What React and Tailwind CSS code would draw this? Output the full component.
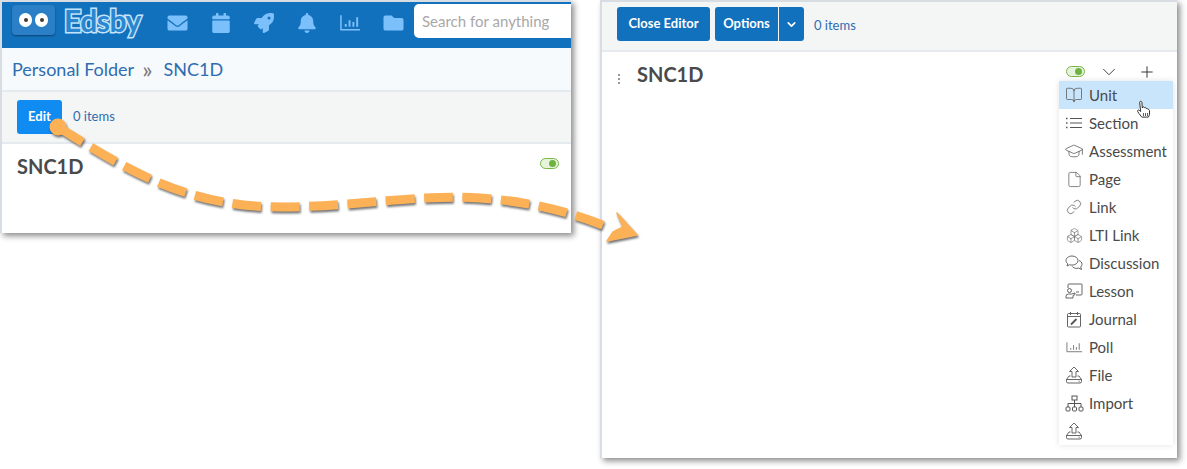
import { FaEnvelope, FaCalendar, FaRocket, FaBell, FaFolder } from 'react-icons/fa'
import { BookOpen, GraduationCap, File, Link, Boxes, ChevronDown, Plus } from 'lucide-react'

function ChartIcon({ className }) {
  return (
    <svg viewBox="0 0 22 18" className={className} fill="none" stroke="currentColor">
      <path d="M1 1v15h20" strokeWidth="1.6" />
      <path d="M6 13v-3M10 13V6M14 13V8M18 13V3" strokeWidth="2" />
    </svg>
  )
}

function ThinChart({ className }) {
  return (
    <svg viewBox="0 0 18 12" className={className} fill="none" stroke="currentColor" strokeWidth="0.8">
      <path d="M1 1v10h16" />
      <path d="M5 9V7M8 9V4M11 9V6M14 9V2" />
    </svg>
  )
}

function UploadTray({ className }) {
  return (
    <svg viewBox="0 0 18 18" className={className} fill="none" stroke="currentColor" strokeWidth="0.9">
      <path d="M9 1 4.500 5.500h2.500v5.500h4V5.500h2.500z" strokeLinejoin="round" />
      <path d="M5.500 10H4l-2.500 3.500v2A1.500 1.500 0 0 0 3 17h12a1.500 1.500 0 0 0 1.500-1.500v-2L14 10h-1.500M1.500 13.500h15" strokeLinejoin="round" />
      <path d="M13.500 15.200h1.200" />
    </svg>
  )
}

function Lesson({ className }) {
  return (
    <svg viewBox="0 0 18 16" className={className} fill="none" stroke="currentColor" strokeWidth="0.9">
      <path d="M3 5V2a1 1 0 0 1 1-1h12.500a.5.5 0 0 1 .5.5V11a1 1 0 0 1-1 1h-5" />
      <circle cx="4.500" cy="7.500" r="2" />
      <path d="M1 15v-1.500A2.500 2.500 0 0 1 3.500 11h3L10 10v1.500l-2 1V15z" strokeLinejoin="round" />
      <path d="M11 9h3" />
    </svg>
  )
}

function Journal({ className }) {
  return (
    <svg viewBox="0 0 16 17" className={className} fill="none" stroke="currentColor" strokeWidth="0.9">
      <rect x="1.500" y="2.500" width="13" height="13.500" rx="1" />
      <path d="M1.500 5.500h13M4.500 1v3M11.500 1v3" />
      <path d="M5 13.500 10.500 8" strokeWidth="1.800" />
    </svg>
  )
}

function Discussion({ className }) {
  return (
    <svg viewBox="0 0 18 16" className={className} fill="none" stroke="currentColor" strokeWidth="0.9">
      <path d="M7 1C3.700 1 1 3 1 5.500c0 1.300.8 2.500 1.800 3.300L2 11l2.500-1.200c.8.200 1.600.3 2.500.3 3.300 0 6-2 6-4.600S10.300 1 7 1z" strokeLinejoin="round" />
      <path d="M14 5.500c1.800.7 3 2 3 3.700 0 1.100-.5 2-1.300 2.800l.8 2.500-2.700-1.400c-.6.200-1.300.3-1.900.3-2 0-3.800-.8-4.700-2.100" strokeLinejoin="round" />
    </svg>
  )
}

function SectionList({ className }) {
  return (
    <svg viewBox="0 0 16 12" className={className} fill="none" stroke="currentColor" strokeWidth="1">
      <path d="M4 1.500h12M4 6h12M4 10.500h12" />
      <path d="M0 1.500h1.500M0 6h1.500M0 10.500h1.500" strokeWidth="1.300" />
    </svg>
  )
}

function Hierarchy({ className }) {
  return (
    <svg viewBox="0 0 19 17" className={className} fill="none" stroke="currentColor" strokeWidth="1">
      <rect x="7" y="1" width="5" height="4" />
      <rect x="1" y="12" width="4" height="4" rx="1" />
      <rect x="7.500" y="12" width="4" height="4" rx="1" />
      <rect x="14" y="12" width="4" height="4" rx="1" />
      <path d="M9.500 5v7M3 12V8.500h13V12" />
    </svg>
  )
}

function Toggle() {
  return (
    <span className="flex h-[11px] w-[19px] items-center justify-end rounded-full border border-[#7ab648] bg-[#e8f3dd] pr-[2px]">
      <span className="h-[7px] w-[7px] rounded-full bg-[#6db33f]" />
    </span>
  )
}

function Eye() {
  return (
    <span className="flex h-[14px] w-[13px] items-center justify-center rounded-full bg-white">
      <span className="h-[4px] w-[4px] rounded-full bg-[#4a3a2a]" />
    </span>
  )
}

const menuItems = [
  { label: 'Unit', icon: <BookOpen size={18} strokeWidth={1} />, active: true },
  { label: 'Section', icon: <SectionList className="h-[12px] w-[16px]" /> },
  { label: 'Assessment', icon: <GraduationCap size={20} strokeWidth={0.9} /> },
  { label: 'Page', icon: <File size={17} strokeWidth={1} /> },
  { label: 'Link', icon: <Link size={16} strokeWidth={1.1} /> },
  { label: 'LTI Link', icon: <Boxes size={17} strokeWidth={1} className="text-[#777]" /> },
  { label: 'Discussion', icon: <Discussion className="h-[16px] w-[18px]" /> },
  { label: 'Lesson', icon: <Lesson className="h-[16px] w-[18px]" /> },
  { label: 'Journal', icon: <Journal className="h-[17px] w-[16px]" /> },
  { label: 'Poll', icon: <ThinChart className="h-[12px] w-[17px]" /> },
  { label: 'File', icon: <UploadTray className="h-[18px] w-[18px]" /> },
  { label: 'Import', icon: <Hierarchy className="h-[17px] w-[19px]" /> },
  { label: '', icon: <UploadTray className="h-[18px] w-[18px]" /> },
]

function LeftWindow() {
  return (
    <div className="flex h-[233px] w-[571px] shrink-0 flex-col border-t-2 border-l-2 border-[#d8dde3] shadow-[3px_3px_6px_rgba(0,0,0,0.45)]">
      <div className="flex h-[46px] items-start bg-[#1271bd]">
        <div className="ml-[10px] mt-[3px] flex h-[30px] w-[43px] items-center justify-center gap-[3px] rounded-[4px] bg-[#2a7fc6] shadow-[0_1px_2px_rgba(0,0,0,0.4)]">
          <Eye />
          <Eye />
        </div>
        <span className="ml-[9px] w-[80px] text-[30px] font-bold leading-[36px] tracking-[-0.5px] text-[#2b86d0] [-webkit-text-stroke:3px_#c4e4fb] [paint-order:stroke_fill]">
          Edsby
        </span>
        <div className="ml-[23px] mt-[11px] flex items-center text-[#7cc0fb]">
          <FaEnvelope className="h-[20px] w-[21px]" />
          <FaCalendar className="ml-[24px] h-[20px] w-[18px]" />
          <FaRocket className="ml-[24px] h-[20px] w-[20px]" />
          <FaBell className="ml-[24px] h-[20px] w-[18px]" />
          <ChartIcon className="ml-[24px] h-[18px] w-[21px]" />
          <FaFolder className="ml-[22px] h-[20px] w-[21px]" />
        </div>
        <div className="ml-[10px] mt-[2px] flex h-[34px] flex-1 items-center rounded-l-[5px] bg-white pl-[8px] text-[15px] text-[#a8a8a8]">
          Search for anything
        </div>
      </div>
      <div className="flex h-[44px] items-center border-b-2 border-[#e4eaf0] bg-[#f6fafd] pl-[10px] text-[18px] text-[#2f6cb0]">
        <span>Personal Folder</span>
        <span className="ml-[8px] mr-[11px] text-[24px] leading-none text-[#777]">»</span>
        <span>SNC1D</span>
      </div>
      <div className="flex h-[52px] items-center border-b-2 border-[#e4eaf0] bg-[#f4f6f6] pl-[15px]">
        <div className="flex h-[34px] w-[45px] items-center justify-center rounded-[3px] bg-[#0f8bf2] text-[13px] font-bold text-white">
          Edit
        </div>
        <span className="ml-[11px] text-[13px] text-[#2f6cb0]">0 items</span>
      </div>
      <div className="flex flex-1 items-start justify-between bg-white pl-[15px] pr-[12px]">
        <span className="mt-[9px] text-[20px] font-bold leading-[26px] text-[#4a4a4a]">SNC1D</span>
        <span className="mt-[14px]">
          <Toggle />
        </span>
      </div>
    </div>
  )
}

function RightWindow() {
  return (
    <div className="ml-[29px] flex h-[458px] w-[577px] shrink-0 flex-col border-t-2 border-l-2 border-[#d8dde3] shadow-[3px_3px_6px_rgba(0,0,0,0.45)]">
      <div className="flex h-[50px] shrink-0 items-start gap-[5px] border-b-2 border-[#e4eaf0] bg-[#f4f6f6] pl-[15px] pt-[5px]">
        <div className="flex h-[34px] w-[93px] items-center justify-center rounded-[3px] bg-[#1271bd] text-[13px] font-bold text-white">
          Close Editor
        </div>
        <div className="flex h-[34px] items-stretch text-white">
          <div className="flex w-[63px] items-center justify-center rounded-l-[3px] bg-[#1271bd] text-[13px] font-bold">
            Options
          </div>
          <div className="ml-[1px] flex w-[25px] items-center justify-center rounded-r-[3px] bg-[#1271bd]">
            <ChevronDown size={13} strokeWidth={3} />
          </div>
        </div>
        <span className="ml-[5px] mt-[9px] text-[13px] text-[#2f6cb0]">0 items</span>
      </div>
      <div className="flex flex-1 items-start bg-white">
        <div className="ml-[16px] mt-[22px] flex flex-col gap-[2px]">
          <span className="h-[2px] w-[2px] bg-[#999]" />
          <span className="h-[2px] w-[2px] bg-[#999]" />
          <span className="h-[2px] w-[2px] bg-[#999]" />
        </div>
        <span className="ml-[17px] mt-[9px] text-[20px] font-bold leading-[26px] text-[#4a4a4a]">SNC1D</span>
        <div className="ml-auto mr-[4px] flex w-[114px] flex-col">
          <div className="flex h-[29px] items-center pl-[7px] pt-[10px] text-[#333]">
            <Toggle />
            <ChevronDown size={22} strokeWidth={1} className="ml-[13px]" />
            <Plus size={18} strokeWidth={1.3} className="ml-[18px]" />
          </div>
          <div className="flex flex-col bg-white shadow-[0_0_6px_rgba(0,0,0,0.12)]">
            {menuItems.map((item, i) => (
              <div
                key={i}
                className={
                  item.active
                    ? 'flex h-[28px] items-center bg-[#c9e5fb] text-[15px] text-[#4a4a4a]'
                    : 'flex h-[28px] items-center text-[15px] text-[#4a4a4a]'
                }
              >
                <span className="flex w-[30px] shrink-0 items-center justify-center text-[#555]">{item.icon}</span>
                {item.label}
              </div>
            ))}
          </div>
        </div>
      </div>
    </div>
  )
}

function Arrow() {
  return (
    <svg viewBox="0 0 1187 469" className="pointer-events-none absolute inset-0 h-full w-full drop-shadow-[1px_2px_1px_rgba(0,0,0,0.55)]" fill="none">
      <circle cx="58" cy="127" r="8.500" fill="#fdb157" />
      <path
        d="M58 127 C 130 172, 190 208, 285 207 C 360 206, 420 194, 480 198 C 525 201, 565 210, 605 226"
        stroke="#fdb157"
        strokeWidth="9"
        strokeDasharray="28.800 9.600"
      />
      <path d="M617 213 L637 235 L607 241 L613 232 L623 227 Z" fill="#fdb157" stroke="#fdb157" strokeLinejoin="round" strokeWidth="1.500" />
    </svg>
  )
}

function HandCursor() {
  return (
    <svg viewBox="0 0 16 20" className="absolute left-[1136px] top-[100px] h-[20px] w-[16px]">
      <path
        d="M4 1.500c.8-.6 1.800 0 1.900.9L6.300 8l.5-1c.8-.3 1.500 0 1.700.7.800-.4 1.600 0 1.700.8.800-.3 1.600 0 1.800.9.700-.2 1.500.4 1.500 1.200v3.500c0 1.200-.6 2-1.200 3H5.800C5 16 3.500 14.500 1.700 11.500c-.5-1 .5-2 1.500-1.200l1.500 1.200L3.700 3c0-.6 0-1.200.3-1.500z"
        fill="#fff"
        stroke="#333"
        strokeWidth="1"
        strokeLinejoin="round"
      />
      <path d="M7.500 13v3M9.500 13v3M11.500 13v3" stroke="#333" strokeWidth="0.800" />
    </svg>
  )
}

export default function App() {
  return (
    <div className="relative flex h-[469px] w-[1187px] items-start overflow-hidden bg-white font-['Lato',sans-serif]">
      <LeftWindow />
      <RightWindow />
      <Arrow />
      <HandCursor />
    </div>
  )
}
